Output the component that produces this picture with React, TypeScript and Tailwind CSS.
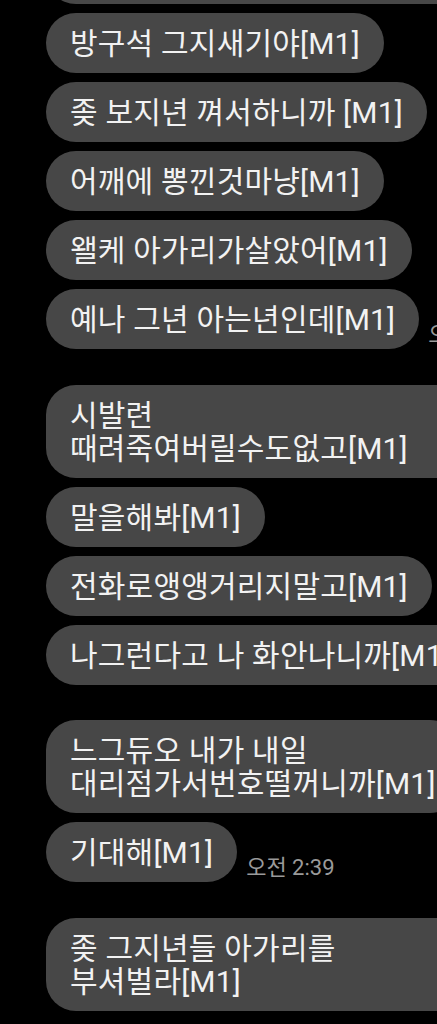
import React from "react";

type Msg = { lines: string[]; wide?: boolean; time?: string };
type Group = Msg[];

const groups: Group[] = [
  [
    { lines: ["방구석 그지새기야[M1]"] },
    { lines: ["좆 보지년 껴서하니까 [M1]"] },
    { lines: ["어깨에 뽕낀것마냥[M1]"] },
    { lines: ["왤케 아가리가살았어[M1]"] },
    { lines: ["예나 그년 아는년인데[M1]"], time: "오전 2:38" },
  ],
  [
    { lines: ["시발련", "때려죽여버릴수도없고[M1]"], wide: true },
    { lines: ["말을해봐[M1]"] },
    { lines: ["전화로앵앵거리지말고[M1]"] },
    { lines: ["나그런다고 나 화안나니까[M1]"] },
  ],
  [
    { lines: ["느그듀오 내가 내일", "대리점가서번호떨꺼니까[M1]"] },
    { lines: ["기대해[M1]"], time: "오전 2:39" },
  ],
  [{ lines: ["좆 그지년들 아가리를", "부셔벌라[M1]"], wide: true }],
];

const Bubble = ({ msg }: { msg: Msg }) => (
  <div className="flex items-end gap-[9px]">
    <div
      className={
        "shrink-0 whitespace-nowrap rounded-[30px] bg-[#474747] px-[24px] py-[13.5px] text-[30px] leading-[33px] tracking-[0.2px] text-[#f2f2f2] " +
        (msg.wide ? "w-[460px]" : "")
      }
    >
      {msg.lines.map((l, i) => (
        <div key={i}>{l}</div>
      ))}
    </div>
    {msg.time && (
      <span className="mb-[2px] shrink-0 whitespace-nowrap text-[22px] leading-[25px] text-[#9a9a9a]">
        {msg.time}
      </span>
    )}
  </div>
);

export default function App() {
  return (
    <div
      className="h-[1024px] w-[437px] overflow-hidden bg-black"
      style={{ fontFamily: 'Roboto, "Noto Sans CJK KR", sans-serif' }}
    >
      <div className="flex flex-col pl-[46px]">
        {/* bubble cut off at the top of the screen */}
        <div className="-mt-[56px] h-[60px] w-[420px] shrink-0 rounded-[30px] bg-[#474747]" />
        {groups.map((g, gi) => (
          <div
            key={gi}
            className={"flex flex-col gap-[9px] " + (gi === 0 ? "mt-[9px]" : gi === 2 ? "mt-[35px]" : "mt-[36px]")}
          >
            {g.map((m, mi) => (
              <Bubble key={mi} msg={m} />
            ))}
          </div>
        ))}
      </div>
    </div>
  );
}
